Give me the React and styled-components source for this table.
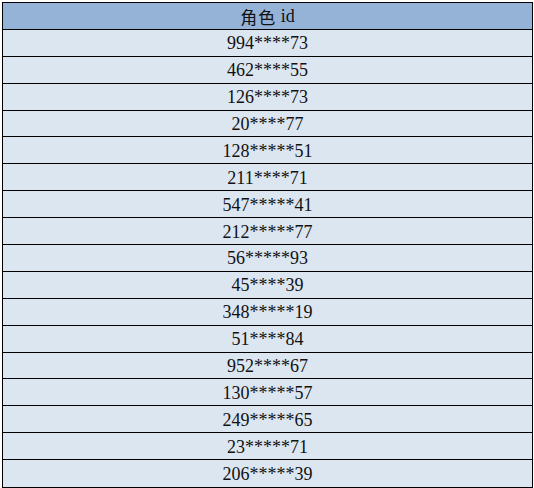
import styled, { createGlobalStyle } from "styled-components";

const GlobalStyle = createGlobalStyle`
	html, body {
		margin: 0;
		padding: 0;
		background: #ffffff;
	}
`;

const ids = [
	"994****73",
	"462****55",
	"126****73",
	"20****77",
	"128*****51",
	"211****71",
	"547*****41",
	"212*****77",
	"56*****93",
	"45****39",
	"348*****19",
	"51****84",
	"952****67",
	"130*****57",
	"249*****65",
	"23*****71",
	"206*****39",
];

const Sheet = styled.div`
	margin: 2px 0 0 2px;
	width: 531px;
	height: 486px;
	box-sizing: border-box;
	border: 1px solid #000;
	display: grid;
	grid-template-rows: repeat(18, 1fr);
	font-family: "Liberation Serif", "Noto Sans CJK SC", serif;
	font-size: 18px;
	color: #111;
`;

const Cell = styled.div`
	display: flex;
	align-items: center;
	justify-content: center;
	background: ${(props) => (props.head ? "#95b3d7" : "#dce6f1")};
	border-bottom: ${(props) => (props.last ? "none" : "1px solid #000")};
	line-height: 1;
	padding-top: 1px;
`;

const Han = styled.span`
	font-family: "Noto Sans CJK SC", sans-serif;
	font-size: 17px;
	letter-spacing: 1px;
`;

export default function App() {
	return (
		<>
			<GlobalStyle />
			<Sheet>
				<Cell head>
					<Han>角色</Han>&nbsp;id
				</Cell>
				{ids.map((id, i) => (
					<Cell key={i} last={i === ids.length - 1}>
						{id}
					</Cell>
				))}
			</Sheet>
		</>
	);
}
